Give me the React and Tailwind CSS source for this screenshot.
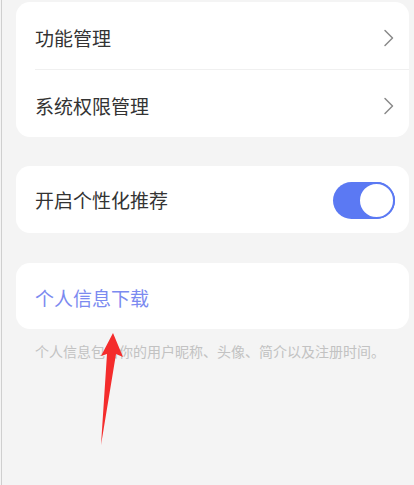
import React from "react";

function Chevron() {
  return (
    <svg width="12" height="18" viewBox="0 0 12 18" className="mr-[14px]">
      <path d="M2 1.5 L9.5 9 L2 16.5" fill="none" stroke="#8a8a8a" strokeWidth="1.5" strokeLinecap="round" strokeLinejoin="round" />
    </svg>
  );
}

export default function App() {
  return (
    <div
      className="relative w-[414px] h-[485px] overflow-hidden bg-[#f4f4f4] pl-px"
      style={{ fontFamily: '"Noto Sans CJK SC", "Noto Sans", sans-serif' }}
    >
      <div className="h-full border-l border-[#cfcfcf] pt-[2px]">
        <div className="ml-[14px] w-[393px] bg-white rounded-[14px]">
          <div className="h-[67px] flex items-center justify-between pl-[19px] pt-[5px]">
            <span className="text-[19px] text-[#333333]">功能管理</span>
            <Chevron />
          </div>
          <div className="ml-[19px] h-px bg-[#f0f0f0]" />
          <div className="h-[67px] flex items-center justify-between pl-[19px] pt-[5px]">
            <span className="text-[19px] text-[#333333]">系统权限管理</span>
            <Chevron />
          </div>
        </div>

        <div className="mt-[29px] ml-[14px] w-[393px] h-[67px] bg-white rounded-[14px] flex items-center justify-between pl-[19px] pr-[14px] pt-[2px]">
          <span className="text-[19px] text-[#333333]">开启个性化推荐</span>
          <div className="w-[62px] h-[37px] rounded-full bg-[#5b79f3] flex items-center justify-end">
            <div className="w-[37px] h-[37px] rounded-full bg-white border-[2px] border-[#5b79f3]" />
          </div>
        </div>

        <div className="mt-[30px] ml-[14px] w-[393px] h-[66px] bg-white rounded-[14px] flex items-center pl-[19px] pt-[4px]">
          <span className="text-[19px] text-[#7b8af0]">个人信息下载</span>
        </div>

        <div className="mt-[12px] ml-[33px] text-[14px] text-[#c2c2c2] leading-[20px]">
          个人信息包含你的用户昵称、头像、简介以及注册时间。
        </div>
      </div>

      <svg className="absolute left-0 top-0 pointer-events-none" width="414" height="485" viewBox="0 0 414 485">
        <polygon points="113,333 123,357 116,354 101,445 107,354 101,356" fill="#f42c2c" />
      </svg>
    </div>
  );
}
